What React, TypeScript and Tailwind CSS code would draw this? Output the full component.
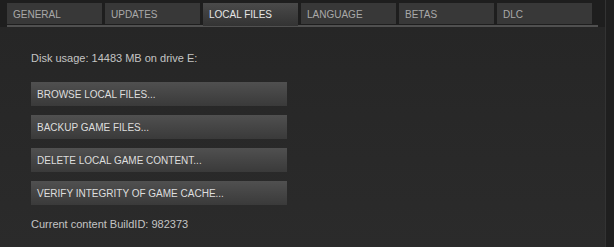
import React from "react";

const tabs = ["GENERAL", "UPDATES", "LOCAL FILES", "LANGUAGE", "BETAS", "DLC"];
const active = "LOCAL FILES";

const actions = [
  "BROWSE LOCAL FILES...",
  "BACKUP GAME FILES...",
  "DELETE LOCAL GAME CONTENT...",
  "VERIFY INTEGRITY OF GAME CACHE...",
];

export default function App() {
  return (
    <div className="w-[614px] h-[247px] flex bg-[#212121] font-['Liberation_Sans',Arial,sans-serif] overflow-hidden">
      <div className="flex-1 flex flex-col bg-[#282828]">
        <div className="bg-[#1e1e1e] pt-[3px] pl-[7px] pr-[7px]">
          <div className="flex gap-[3px] items-start h-[22px]">
            {tabs.map((t) => (
              <div
                key={t}
                className={
                  t === active
                    ? "w-[95px] h-[23px] pl-[6px] pt-[6px] text-[10px] leading-[12px] text-[#e6e6e6] bg-gradient-to-b from-[#4a4a4a] to-[#333333]"
                    : "w-[95px] h-[21px] pl-[6px] pt-[6px] text-[10px] leading-[12px] text-[#a9a9a9] bg-[#383838]"
                }
              >
                {t}
              </div>
            ))}
          </div>
          <div className="h-[2px] bg-[#505050]" />
        </div>
        <div className="flex-1 flex flex-col pl-[31px] pt-[25px] bg-gradient-to-b from-[#262626] to-[#2b2b2b]">
          <p className="text-[11px] leading-[13px] text-[#c4c4c4]">Disk usage: 14483 MB on drive E:</p>
          <div className="flex flex-col gap-[9px] mt-[17px]">
            {actions.map((a) => (
              <button
                key={a}
                className="w-[256px] h-[24px] pl-[6px] text-left text-[10px] text-[#dedede] bg-gradient-to-b from-[#505050] to-[#3a3a3a]"
              >
                {a}
              </button>
            ))}
          </div>
          <p className="mt-[13px] text-[11px] leading-[13px] text-[#c4c4c4]">Current content BuildID: 982373</p>
        </div>
      </div>
      <div className="w-[9px] bg-[#1f1f1f] border-l border-[#333333]" />
    </div>
  );
}
